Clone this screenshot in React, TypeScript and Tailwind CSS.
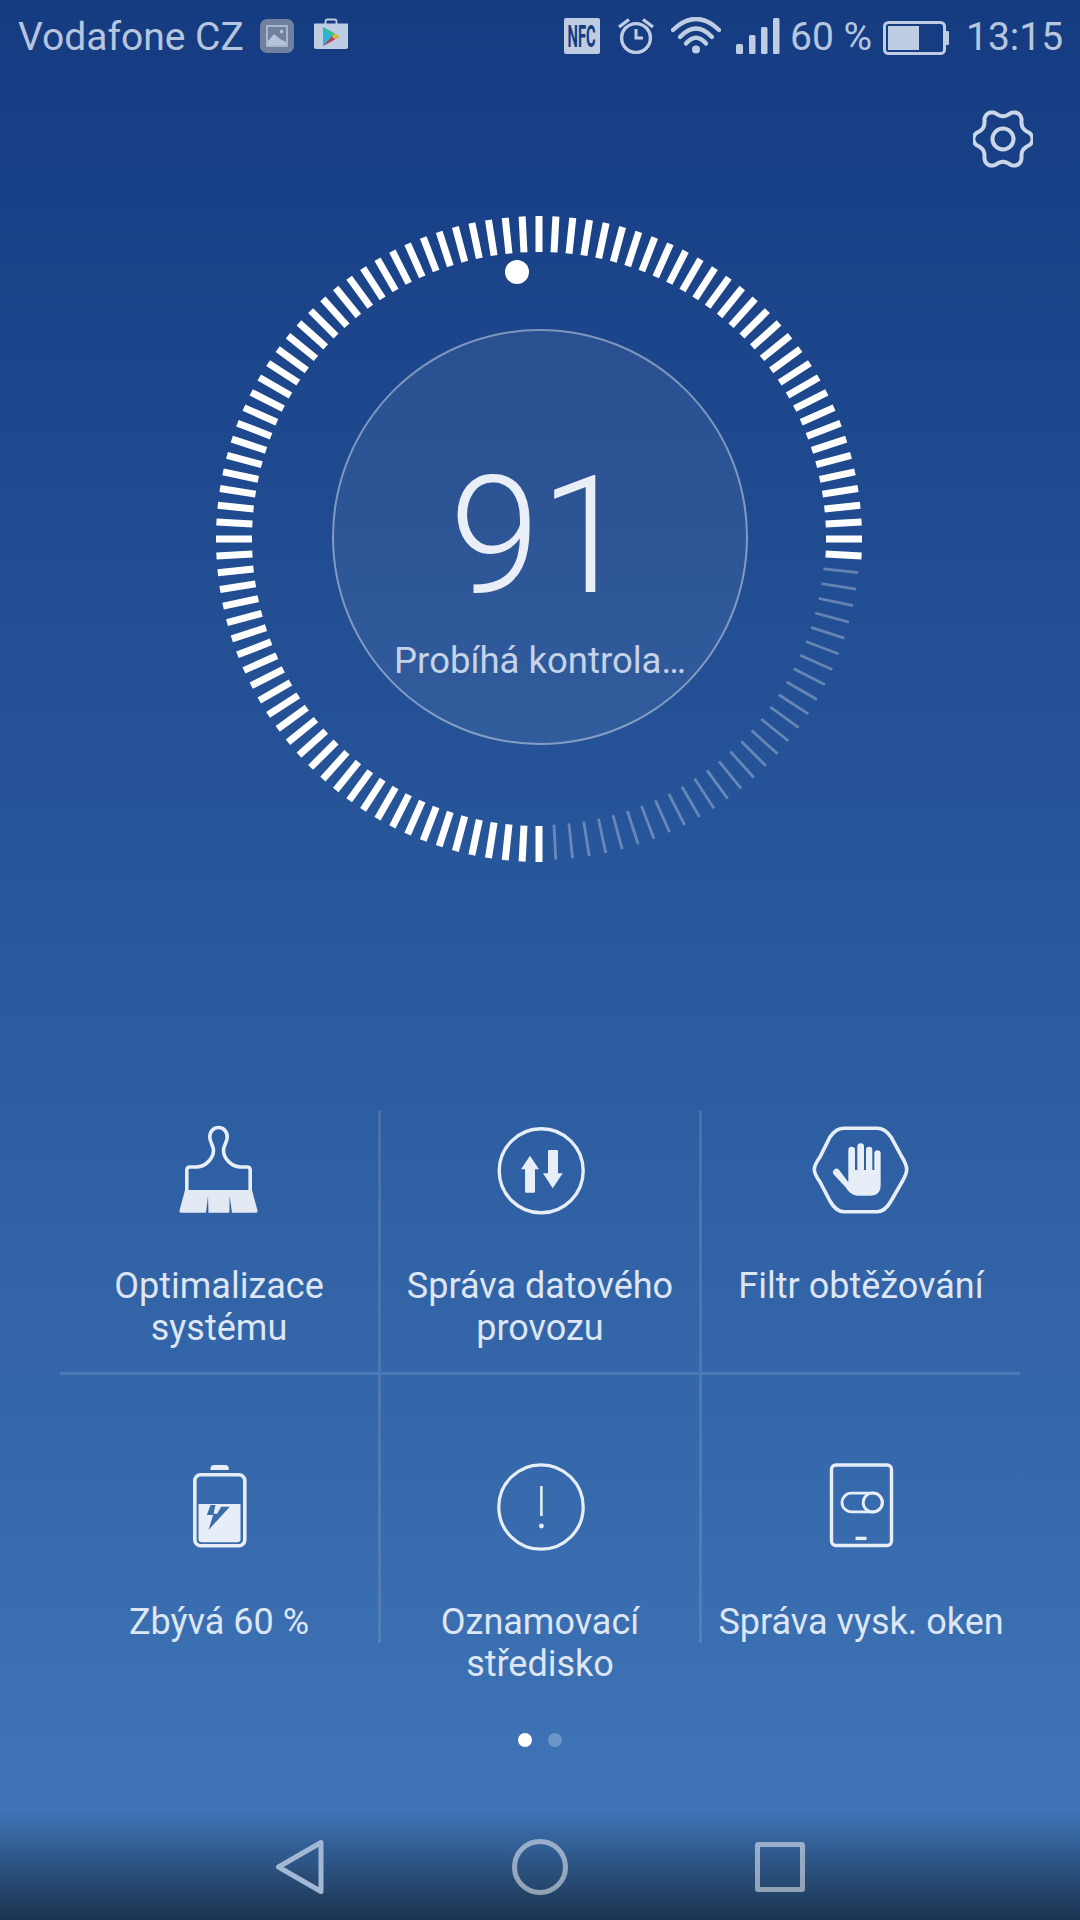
const FONT = "font-['Roboto','Noto_Sans',sans-serif]";

function gearPath() {
  const pts: string[] = [];
  for (let i = 0; i <= 240; i++) {
    const t = (i / 240) * Math.PI * 2;
    const k = Math.cos(6 * t);
    const r = 26.2 + 3.4 * (k >= 0 ? Math.pow(k, 0.8) : -Math.pow(-k, 0.8));
    pts.push(`${(30 + r * Math.cos(t)).toFixed(2)} ${(30 + r * Math.sin(t)).toFixed(2)}`);
  }
  return "M" + pts.join("L") + "Z";
}

function Ring() {
  const cx = 330;
  const cy = 330;
  const ticks = Array.from({ length: 120 }, (_, i) => i);
  return (
    <svg width="660" height="660" viewBox="0 0 660 660" className="block">
      {ticks.map((i) => {
        const a = (i * 3 * Math.PI) / 180;
        const dim = i >= 32 && i < 60;
        const r1 = dim ? 286 : 287;
        const r2 = dim ? 321 : 323;
        const s = Math.sin(a);
        const c = -Math.cos(a);
        return (
          <line
            key={i}
            x1={cx + r1 * s}
            y1={cy + r1 * c}
            x2={cx + r2 * s}
            y2={cy + r2 * c}
            stroke={dim ? "rgba(255,255,255,0.3)" : "#ffffff"}
            strokeWidth={dim ? 2.8 : 7}
          />
        );
      })}
      <circle cx="308" cy="63" r="12" fill="#ffffff" />
    </svg>
  );
}

const IC = "#e8eef7";

function BrushIcon() {
  return (
    <svg width="100" height="100" viewBox="0 0 100 100" fill="none">
      <path
        d="M17.8 70V49Q17.8 46 21 46H27C36 46 44.5 38 44.5 29C44.5 25 40.8 21 40.8 16C40.8 10.5 44.5 6.5 49.5 6.5C54.5 6.5 58.2 10.5 58.2 16C58.2 21 54.5 25 54.5 29C54.5 38 63 46 72 46H78Q81.2 46 81.2 49V70"
        stroke={IC}
        strokeWidth="3.6"
      />
      <path
        d="M16 69H83L88.5 89.5Q89 91.7 86.5 91.7H63L60.6 75L60.4 91.7H39.5L39 75L37 91.7H12.5Q10 91.7 10.5 89.5Z"
        fill="#e2e9f3"
      />
    </svg>
  );
}

function ArrowsIcon() {
  return (
    <svg width="100" height="100" viewBox="0 0 100 100" fill="none">
      <circle cx="51.2" cy="49.8" r="42" stroke={IC} strokeWidth="3.4" />
      <path d="M40 34.7L49 48.3H45V70.5Q45 71.7 43.8 71.7H36.2Q35 71.7 35 70.5V48.3H31Z" fill={IC} />
      <path d="M58 30.2Q58 29 59.2 29H66.8Q68 29 68 30.2V52.3H72.7L62.7 67.3L53 52.3H58Z" fill={IC} />
    </svg>
  );
}

function HandIcon() {
  return (
    <svg width="100" height="100" viewBox="0 0 100 100" fill="none">
      <path
        d="M9 36Q3.3 44 3.3 48.5Q3.3 53 9 61L19 80Q25 90.7 33 90.7H66Q74 90.7 80 80L91 61Q95.7 53 95.7 48.5Q95.7 44 91 36L80 16Q74 7.3 66 7.3H33Q25 7.3 19 16Z"
        stroke={IC}
        strokeWidth="3.6"
      />
      <g transform="translate(-31 -21) scale(0.3333)">
        <path
          d="M205 150a10 10 0 0 1 20 0V210H232V140a10 10 0 0 1 20 0V210H258V150a9.5 9.5 0 0 1 19 0V210H283V160a9.5 9.5 0 0 1 19 0V255Q302 287 270 287H232Q212 287 197 262L162 224a10 10 0 0 1 15-15L205 247Z"
          fill={IC}
        />
      </g>
    </svg>
  );
}

function BatteryIcon() {
  return (
    <svg width="100" height="100" viewBox="0 0 100 100" fill="none">
      <path d="M41.5 13V11.5Q41.5 8 45 8H56Q59.8 8 59.8 11.5V13Z" fill={IC} />
      <rect x="25.8" y="17.7" width="50" height="71" rx="6" stroke={IC} strokeWidth="3.6" />
      <path d="M29.5 47H71.5V82Q71.5 85.3 68 85.3H33Q29.5 85.3 29.5 82Z" fill={IC} />
      <g transform="translate(15.5 -2) scale(0.3333)">
        <path d="M72 225L136 155H110L98 176H87L93 150H78L67 180H86Z" fill="#3a6da9" />
      </g>
    </svg>
  );
}

function AlertIcon() {
  return (
    <svg width="100" height="100" viewBox="0 0 100 100" fill="none">
      <circle cx="51" cy="50" r="42.2" stroke={IC} strokeWidth="3.2" />
      <line x1="51.4" y1="29" x2="51.4" y2="59" stroke={IC} strokeWidth="2.6" />
      <circle cx="51.4" cy="69" r="2.4" fill={IC} />
    </svg>
  );
}

function PhoneIcon() {
  return (
    <svg width="100" height="100" viewBox="0 0 100 100" fill="none">
      <rect x="20.5" y="8" width="60" height="80.5" rx="4.5" stroke={IC} strokeWidth="3.4" />
      <rect x="31" y="36.2" width="40.3" height="18.6" rx="9.3" stroke={IC} strokeWidth="2.8" />
      <circle cx="61.8" cy="45.5" r="9.6" stroke={IC} strokeWidth="2.8" />
      <rect x="44.5" y="79.7" width="11" height="3.4" fill={IC} />
    </svg>
  );
}

function Cell({
  icon,
  label,
  top,
  mt,
  border,
  width,
}: {
  icon: React.ReactNode;
  label: string[];
  top: string;
  mt: string;
  border: boolean;
  width: string;
}) {
  return (
    <div className={`flex flex-col items-center ${top} ${width} ${border ? "border-r-[3px] border-white/[.12]" : ""}`}>
      <div className="h-[100px] w-[100px] shrink-0">{icon}</div>
      <div className={`${mt} whitespace-nowrap text-center text-[36px] leading-[42px] text-[#dde6f2]`}>
        {label.map((l) => (
          <div key={l}>{l}</div>
        ))}
      </div>
    </div>
  );
}

function StatusBar() {
  const C = "#bfcde2";
  return (
    <div className="flex h-[60px] items-center text-[39px] leading-none text-[#b6c6de]">
      <span className="ml-[18px] w-[242px] whitespace-nowrap pt-[14px]">Vodafone CZ</span>
      <div className="mt-[12px] flex h-[34px] w-[34px] items-center justify-center rounded-[7px] bg-[#6f819f]">
        <svg width="22" height="22" viewBox="0 0 22 22" fill="none">
          <rect x="1" y="1" width="20" height="20" stroke="#b6c4da" strokeWidth="1.6" />
          <path d="M2 16L8 9L14 14L20 17V20H2Z" fill="#b6c4da" />
          <circle cx="15.5" cy="6.5" r="1.8" fill="#b6c4da" />
        </svg>
      </div>
      <svg width="34" height="34" viewBox="0 0 34 34" className="ml-[20px] mt-[10px]" fill="none">
        <path d="M11.5 6V3.5Q11.5 1.5 13.5 1.5H20.5Q22.5 1.5 22.5 3.5V6" stroke={C} strokeWidth="1.8" />
        <path d="M0 6.5Q0 5.5 1 5.5H33Q34 5.5 34 6.5V29Q34 31 32 31H2Q0 31 0 29Z" fill={C} />
        <path d="M9 9L26 18.5L9 28Z" fill="#2bb6d8" />
        <path d="M9 9L21 15.5L17.5 18.5Z" fill="#3dbd8a" />
        <path d="M21 15.5L26 18.5L21 21.5L17.5 18.5Z" fill="#d9b637" />
        <path d="M9 28L17.5 18.5L21 21.5Z" fill="#c23a5d" />
      </svg>
      <div className="ml-[216px] mt-[12px] flex h-[36px] w-[36px] items-center justify-center overflow-hidden rounded-[2px] bg-[#bfcde2]">
        <span className="scale-x-[0.46] whitespace-nowrap text-[32px] font-bold leading-none text-[#153b81]">NFC</span>
      </div>
      <svg width="38" height="38" viewBox="0 0 38 38" className="ml-[17px] mt-[12px]" fill="none">
        <circle cx="19" cy="21" r="14.4" stroke={C} strokeWidth="3.4" />
        <path d="M19 12V21H26" stroke={C} strokeWidth="3" />
        <path d="M2 10L12 2.5M36 10L26 2.5" stroke={C} strokeWidth="3.4" />
      </svg>
      <svg width="50" height="38" viewBox="0 0 50 38" className="ml-[16px] mt-[12px]" fill="none">
        <path d="M2 13Q25 -9 48 13" stroke={C} strokeWidth="4.4" strokeLinecap="round" />
        <path d="M9 20Q25 3 41 20" stroke={C} strokeWidth="4.4" strokeLinecap="round" />
        <path d="M15 26.5Q25 15 35 26.5" stroke={C} strokeWidth="4.4" strokeLinecap="round" />
        <circle cx="25" cy="32.5" r="4" fill={C} />
      </svg>
      <svg width="44" height="37" viewBox="0 0 44 37" className="ml-[15px] mt-[12px]" fill={C}>
        <rect x="0" y="26" width="7" height="10" rx="1.5" />
        <rect x="13" y="17" width="6.5" height="19" rx="1.5" />
        <rect x="25" y="9" width="6.5" height="27" rx="1.5" />
        <rect x="37" y="0" width="6.5" height="36" rx="1.5" />
      </svg>
      <span className="ml-[10px] w-[93px] whitespace-nowrap pt-[14px]">60 %</span>
      <svg width="66" height="34" viewBox="0 0 66 34" fill="none" className="mt-[15px]">
        <rect x="1.5" y="1.5" width="60" height="31" rx="4" stroke={C} strokeWidth="3" />
        <rect x="5" y="5" width="31" height="24" fill={C} />
        <path d="M62 10H65Q66 10 66 11V23Q66 24 65 24H62Z" fill={C} />
      </svg>
      <span className="ml-[17px] pt-[14px]">13:15</span>
    </div>
  );
}

export default function App() {
  const CELLW = ["w-[321px]", "w-[321px]", "w-[318px]"];
  return (
    <div
      className={`relative flex h-[1920px] w-[1080px] flex-col overflow-hidden bg-gradient-to-b from-[#153b81] to-[#3e74b6] to-[94%] ${FONT}`}
    >
      <StatusBar />

      <div className="flex h-[149px] justify-end pr-[47px] pt-[49px]">
        <svg width="60" height="60" viewBox="0 0 60 60" fill="none">
          <path d={gearPath()} stroke="#cbd6e8" strokeWidth="4" strokeLinejoin="round" />
          <circle cx="30" cy="30" r="10.5" stroke="#cbd6e8" strokeWidth="4" />
        </svg>
      </div>

      <div className="relative ml-[209px] h-[660px] w-[660px]">
        <Ring />
        <div className="absolute left-[123px] top-[120px] flex h-[416px] w-[416px] flex-col items-center rounded-full border-2 border-white/40 bg-white/[.06]">
          <div className="mt-[121px] text-[163px] font-light leading-[170px] text-[#e9eef7]">91</div>
          <div className="mt-[17px] whitespace-nowrap text-[36.5px] leading-[44px] text-[#c6d3e6]">Probíhá kontrola…</div>
        </div>
      </div>

      <div className="ml-[60px] mt-[241px] w-[960px]">
        <div className="flex h-[265px] border-b-[3px] border-white/[.12]">
          <Cell width={CELLW[0]} border top="pt-[11px]" mt="mt-[44px]" icon={<BrushIcon />} label={["Optimalizace", "systému"]} />
          <Cell width={CELLW[1]} border top="pt-[11px]" mt="mt-[44px]" icon={<ArrowsIcon />} label={["Správa datového", "provozu"]} />
          <Cell width={CELLW[2]} border={false} top="pt-[11px]" mt="mt-[44px]" icon={<HandIcon />} label={["Filtr obtěžování"]} />
        </div>
        <div className="flex h-[268px]">
          <Cell width={CELLW[0]} border top="pt-[82px]" mt="mt-[44px]" icon={<BatteryIcon />} label={["Zbývá 60 %"]} />
          <Cell width={CELLW[1]} border top="pt-[82px]" mt="mt-[44px]" icon={<AlertIcon />} label={["Oznamovací", "středisko"]} />
          <Cell width={CELLW[2]} border={false} top="pt-[82px]" mt="mt-[44px]" icon={<PhoneIcon />} label={["Správa vysk. oken"]} />
        </div>
      </div>

      <div className="mt-[90px] flex justify-center gap-[16px]">
        <div className="h-[14px] w-[14px] rounded-full bg-white" />
        <div className="h-[14px] w-[14px] rounded-full bg-white/25" />
      </div>

      <div className="absolute bottom-0 left-0 flex h-[110px] w-full items-start bg-gradient-to-b from-transparent to-[#1b3350]">
        <div className="mt-[29px] flex w-full items-center">
          <svg width="50" height="56" viewBox="0 0 50 56" className="ml-[275px]" fill="none">
            <path d="M46 3.5V52.5L3.5 28Z" stroke="#a3b8d4" strokeWidth="5" strokeLinejoin="round" />
          </svg>
          <div className="ml-[187px] h-[56px] w-[56px] rounded-full border-[5px] border-white/50" />
          <div className="ml-[187px] h-[50px] w-[50px] rounded-[3px] border-[5px] border-white/50" />
        </div>
      </div>
    </div>
  );
}
